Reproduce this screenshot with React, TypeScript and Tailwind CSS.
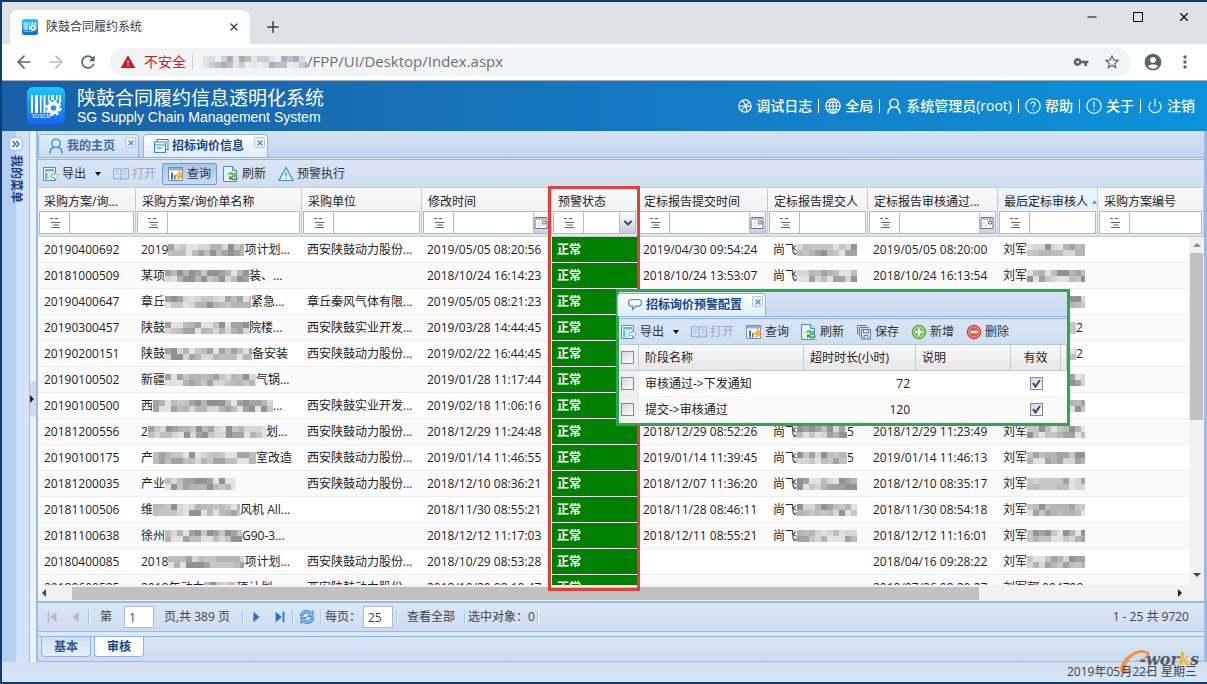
import type { ReactNode } from 'react';
import {
	ArrowLeft,
	ArrowRight,
	ChevronDown,
	ChevronsRight,
	Minus,
	Plus,
	Power,
	X
} from 'lucide-react';
import {
	MdAccountCircle,
	MdMoreVert,
	MdRefresh,
	MdStarBorder,
	MdVpnKey,
	MdWarning
} from 'react-icons/md';
import { clsx } from 'clsx';

type Masked = { pre: string; mask: number; post?: string };

type Row = {
	code: string;
	name: Masked;
	unit: string;
	modified: string;
	submitted: string;
	submitter?: Masked;
	approved: string;
	reviewer: Masked;
};

const POWER = '西安陕鼓动力股份...';
const INDUSTRY = '西安陕鼓实业开发...';
const submitter: Masked = { pre: '尚飞', mask: 60 };
const reviewer: Masked = { pre: '刘军', mask: 58 };

const rows: Row[] = [
	{ code: '20190400692', name: { pre: '2019', mask: 76, post: '项计划...' }, unit: POWER, modified: '2019/05/05 08:20:56', submitted: '2019/04/30 09:54:24', submitter, approved: '2019/05/05 08:20:00', reviewer },
	{ code: '20181000509', name: { pre: '某项', mask: 84, post: '装、...' }, unit: '', modified: '2018/10/24 16:14:23', submitted: '2018/10/24 13:53:07', submitter, approved: '2018/10/24 16:13:54', reviewer },
	{ code: '20190400647', name: { pre: '章丘', mask: 86, post: '紧急...' }, unit: '章丘秦风气体有限...', modified: '2019/05/05 08:21:23', submitted: '', approved: '', reviewer },
	{ code: '20190300457', name: { pre: '陕鼓', mask: 84, post: '院楼...' }, unit: INDUSTRY, modified: '2019/03/28 14:44:45', submitted: '', approved: '', reviewer: { pre: '刘军', mask: 49, post: '2' } },
	{ code: '20190200151', name: { pre: '陕鼓', mask: 87, post: '备安装' }, unit: POWER, modified: '2019/02/22 16:44:45', submitted: '', approved: '', reviewer: { pre: '刘军', mask: 49, post: '2' } },
	{ code: '20190100502', name: { pre: '新疆', mask: 91, post: '气锅...' }, unit: '', modified: '2019/01/28 11:17:44', submitted: '', approved: '', reviewer },
	{ code: '20190100500', name: { pre: '西', mask: 120, post: '...' }, unit: INDUSTRY, modified: '2019/02/18 11:06:16', submitted: '', approved: '', reviewer },
	{ code: '20181200556', name: { pre: '2', mask: 118, post: '划...' }, unit: POWER, modified: '2018/12/29 11:24:48', submitted: '2018/12/29 08:52:26', submitter: { pre: '尚飞', mask: 50, post: '5' }, approved: '2018/12/29 11:23:49', reviewer },
	{ code: '20190100175', name: { pre: '产', mask: 103, post: '室改造' }, unit: POWER, modified: '2019/01/14 11:46:55', submitted: '2019/01/14 11:39:45', submitter: { pre: '尚飞', mask: 50, post: '5' }, approved: '2019/01/14 11:46:13', reviewer },
	{ code: '20181200035', name: { pre: '产业', mask: 70 }, unit: POWER, modified: '2018/12/10 08:36:21', submitted: '2018/12/07 11:36:20', submitter, approved: '2018/12/10 08:35:17', reviewer },
	{ code: '20181100506', name: { pre: '维', mask: 87, post: '风机 All...' }, unit: '', modified: '2018/11/30 08:55:21', submitted: '2018/11/28 08:46:11', submitter, approved: '2018/11/30 08:54:18', reviewer },
	{ code: '20181100638', name: { pre: '徐州', mask: 77, post: 'G90-3...' }, unit: '', modified: '2018/12/12 11:17:03', submitted: '2018/12/11 08:55:21', submitter, approved: '2018/12/12 11:16:01', reviewer },
	{ code: '20180400085', name: { pre: '2018', mask: 76, post: '项计划...' }, unit: POWER, modified: '2018/10/29 08:53:28', submitted: '', approved: '2018/04/16 09:28:22', reviewer },
	{ code: '20180600585', name: { pre: '2018年动力', mask: 32, post: '项计划...' }, unit: POWER, modified: '2018/10/29 08:19:47', submitted: '', approved: '2018/07/26 08:20:27', reviewer: { pre: '刘军郭 004709', mask: 0 } }
];

const columns: { title: string; kind?: 'date' | 'select'; sorted?: boolean }[] = [
	{ title: '采购方案/询...' },
	{ title: '采购方案/询价单名称' },
	{ title: '采购单位' },
	{ title: '修改时间', kind: 'date' },
	{ title: '预警状态', kind: 'select' },
	{ title: '定标报告提交时间', kind: 'date' },
	{ title: '定标报告提交人' },
	{ title: '定标报告审核通过...', kind: 'date' },
	{ title: '最后定标审核人', sorted: true },
	{ title: '采购方案编号' }
];

export default function App() {
	return (
		<div className="flex h-screen w-full flex-col overflow-hidden border-2 border-r-0 border-[#0f3a78] bg-[#dfe8f6] font-['Open_Sans','Noto_Sans_CJK_SC',sans-serif] text-xs text-[#222]">
			<BrowserBar />
			<AppHeader />
			<div className="flex min-h-0 flex-1 bg-[#e9f2fd]">
				<SideBar />
				<MainPanel />
			</div>
			<footer className="relative flex h-5 shrink-0 items-center justify-end bg-linear-to-b from-[#d3deed] to-[#d6e6fb] pr-2.5 text-[#444]">
				<Watermark />
				<span className="relative">2019年05月22日 星期三</span>
			</footer>
		</div>
	);
}

function BrowserBar() {
	return (
		<div className="shrink-0 border-b border-[#a9adb3] bg-white">
			<div className="flex h-[42px] items-end bg-[#dee1e6] pl-2">
				<div className="flex h-[34px] w-60 items-center rounded-t-lg bg-white pr-2.5 pl-3">
					<Logo className="h-4 w-4" />
					<span className="ml-2 flex-1 text-[#3c4043]">陕鼓合同履约系统</span>
					<button aria-label="关闭标签页">
						<X className="h-3 w-3 text-[#45494d]" strokeWidth={3} />
					</button>
				</div>
				<button aria-label="新标签页" className="mb-2 ml-3.5">
					<Plus className="h-[18px] w-[18px] text-[#3c4043]" />
				</button>
				<div className="mb-5 ml-auto flex items-center gap-8 pr-4 text-black">
					<button aria-label="最小化">
						<Minus className="h-3.5 w-3.5" />
					</button>
					<button aria-label="最大化">
						<svg viewBox="0 0 14 14" className="h-3.5 w-3.5" fill="none" stroke="currentColor">
							<path d="M2.5 2.500h9v9h-9z" />
						</svg>
					</button>
					<button aria-label="关闭">
						<X className="h-3.5 w-3.5" strokeWidth={2} />
					</button>
				</div>
			</div>
			<div className="flex h-9 items-center pr-3 pl-3 text-[#5f6368]">
				<button aria-label="后退">
					<ArrowLeft className="h-5 w-5" />
				</button>
				<button aria-label="前进" className="ml-3 text-[#b8babd]">
					<ArrowRight className="h-5 w-5" />
				</button>
				<button aria-label="刷新" className="ml-3">
					<MdRefresh className="h-5 w-5" />
				</button>
				<div className="ml-3 flex h-7 flex-1 items-center rounded-full bg-[#f1f3f4] pr-2.5 pl-2.5 text-sm">
					<MdWarning className="h-4 w-4 text-[#c5221f]" />
					<span className="ml-2 text-[#c5221f]">不安全</span>
					<span className="mx-1.5 h-4 w-px bg-[#d0d3d6]" />
					<span className="ml-1 flex">
						<Mosaic width={104} seed={77} tint />
					</span>
					<span className="flex-1 text-[15px] text-[#6d7175]">/FPP/UI/Desktop/Index.aspx</span>
					<MdVpnKey className="h-4 w-4" />
					<MdStarBorder className="ml-3.5 h-[18px] w-[18px]" />
				</div>
				<MdAccountCircle className="ml-3 h-5 w-5" />
				<MdMoreVert className="ml-3 h-5 w-5" />
			</div>
		</div>
	);
}

function AppHeader() {
	return (
		<header className="flex h-[50px] shrink-0 items-center bg-linear-to-r from-[#195fa5] to-[#0a92db] pr-3 pl-[25px] text-white">
			<Logo className="h-[38px] w-[38px]" />
			<div className="ml-3">
				<h1 className="text-[19px] leading-[22px]">陕鼓合同履约信息透明化系统</h1>
				<p className="font-['Liberation_Sans',sans-serif] text-sm leading-4">
					SG Supply Chain Management System
				</p>
			</div>
			<nav className="ml-auto flex items-center gap-1.5 text-sm font-medium">
				<HeaderLink text="调试日志">
					<svg viewBox="0 0 16 16" className="h-3.5 w-3.5" fill="none" stroke="currentColor" strokeWidth="1.3">
						<circle cx="8" cy="8" r="7" />
						<path d="M1 8c5 1 10-1 12-5M5 2c3 3 5 8 5 13M4 14c1-5 6-7 11-5" />
					</svg>
				</HeaderLink>
				<Bar />
				<HeaderLink text="全局">
					<svg viewBox="0 0 16 16" className="h-4 w-4" fill="none" stroke="currentColor" strokeWidth="1.1">
						<circle cx="8" cy="8" r="7.2" />
						<ellipse cx="8" cy="8" rx="3.5" ry="7.2" />
						<path d="M8 1v14M1 8h14M2 4.5h12M2 11.5h12" />
					</svg>
				</HeaderLink>
				<Bar />
				<HeaderLink text="系统管理员(root)">
					<PersonIcon className="h-4 w-4" />
				</HeaderLink>
				<Bar />
				<HeaderLink text="帮助">
					<svg viewBox="0 0 16 16" className="h-4 w-4" fill="none" stroke="currentColor" strokeWidth="1.1">
						<circle cx="8" cy="8" r="7.2" />
						<path d="M5.9 6.2c0-3 4.400-2.700 4.300-.1C10.200 7.600 8 7.700 8 9.700M8 11v1.300" />
					</svg>
				</HeaderLink>
				<Bar />
				<HeaderLink text="关于">
					<svg viewBox="0 0 16 16" className="h-4 w-4" fill="none" stroke="currentColor" strokeWidth="1.1">
						<circle cx="8" cy="8" r="7.2" />
						<path d="M8 3.5v6M8 11v1.5" />
					</svg>
				</HeaderLink>
				<Bar />
				<HeaderLink text="注销">
					<Power className="h-4 w-4" strokeWidth={1.7} />
				</HeaderLink>
			</nav>
		</header>
	);
}

function HeaderLink({ text, children }: { text: string; children: ReactNode }) {
	return (
		<a href="#" className="flex items-center gap-1 whitespace-nowrap">
			{children}
			{text}
		</a>
	);
}

function Bar() {
	return <span className="h-3.5 w-px bg-white" />;
}

function SideBar() {
	return (
		<aside className="mr-1.5 flex w-7 shrink-0 border-r border-[#a9bfe0] bg-linear-to-r from-[#b4cff0] from-50% to-[#d4e2fb] to-55%">
			<div className="flex w-full flex-col items-center pt-1.5">
				<button aria-label="展开" className="flex h-3.5 w-3.5 items-center justify-center rounded-sm border border-[#9db9de] bg-[#f0f6ff]">
					<ChevronsRight className="h-3 w-3 text-[#2f568f]" strokeWidth={2.5} />
				</button>
				<span className="mt-1 font-bold text-[#15428b] [text-orientation:sideways] [writing-mode:vertical-rl]">
					我的菜单
				</span>
			</div>
		</aside>
	);
}

function MainPanel() {
	return (
		<main className="relative flex min-w-0 flex-1 flex-col border-r-[3px] border-b border-l-2 border-[#99bbe8] bg-[#d5e3f4]">
			<span className="absolute top-[250px] -left-2 flex h-9 w-1.5 items-center rounded-l bg-[#d5dbe6]">
				<svg viewBox="0 0 4 8" className="h-2 w-1">
					<path d="M0 0l4 4-4 4z" fill="#222" />
				</svg>
			</span>
			<div className="flex h-[26px] shrink-0 items-end gap-1 bg-linear-to-b from-[#d5e2f2] to-[#c3d6ef]">
				<Tab text="我的主页">
					<PersonIcon className="h-4 w-4 text-[#3c94cf]" />
				</Tab>
				<Tab text="招标询价信息" active>
					<svg viewBox="0 0 16 16" className="h-4 w-4" fill="none" stroke="#2f93b8" strokeWidth="1.2">
						<path d="M4 3.5V1.5h11v10h-2M1.5 4h11v10.500h-11zM1.5 7h11M4 10h5" />
					</svg>
				</Tab>
			</div>
			<div className="h-[3px] shrink-0 border-y border-[#8db2e3] bg-[#deecfd]" />
			<div className="flex h-[27px] shrink-0 items-center bg-linear-to-b from-[#d9e5f5] to-[#cfdff1]">
				<div className="-ml-px flex">
					<CommonTools active />
					<Tool text="预警执行">
						<svg viewBox="0 0 16 16" className="h-4 w-4" fill="#e3f1fb" stroke="#3a93c9" strokeWidth="1.200">
							<path d="M8 1.5L15 14.500H1zM8 6v4.500M8 11.800v1.200" />
						</svg>
					</Tool>
				</div>
			</div>
			<Grid />
			<Pager />
			<div className="h-1 shrink-0 bg-[#d9e8fb]" />
			<div className="flex h-[25px] shrink-0 gap-[3px] border-t border-[#8db2e3] bg-linear-to-b from-[#dae6f4] to-[#cbdcf0] pl-[3px] font-bold text-[#30588f]">
				<button className="h-5 w-[50px] rounded-b border border-t-0 border-[#8db2e3] bg-linear-to-b from-[#cfe0f5] to-[#e6f0fc]">
					基本
				</button>
				<button className="h-5 w-[50px] rounded-b border border-t-0 border-[#8db2e3] bg-white text-[#15428b]">
					审核
				</button>
			</div>
		</main>
	);
}

function Tab({ text, active, children }: { text: string; active?: boolean; children: ReactNode }) {
	return (
		<div
			className={clsx(
				'flex h-[23px] items-start rounded-t border border-b-0 border-[#8db2e3] pr-0.5 pl-[9px] font-bold',
				active ? 'bg-linear-to-b from-white to-[#deecfd] text-[#15498b]' : 'bg-linear-to-b from-[#e3eefb] to-[#c8daf2] text-[#416aa3]'
			)}
		>
			<button className="flex h-[22px] items-center gap-[3px]">
				{children}
				{text}
			</button>
			<button aria-label="关闭" className="mt-0.5 ml-2.5 flex h-[11px] w-[11px] items-center justify-center rounded-xs border border-[#b3c8e6] bg-[#eaf2fd]">
				<X className="h-2 w-2 text-[#7088ab]" strokeWidth={4} />
			</button>
		</div>
	);
}

function Tool({ text, active, disabled, caret, children }: { text: string; active?: boolean; disabled?: boolean; caret?: boolean; children: ReactNode }) {
	return (
		<button
			disabled={disabled}
			className={clsx(
				'flex h-[22px] items-center gap-[3px] rounded-xs border px-[5px] whitespace-nowrap',
				active ? 'border-[#7a9ac4] bg-linear-to-b from-[#a9c8ee] to-[#c5dbf5]' : 'border-transparent',
				disabled ? 'text-[#9ba8b8]' : 'text-[#333]'
			)}
		>
			{children}
			{text}
			{caret && (
				<svg viewBox="0 0 6 4" className="ml-1.5 h-1 w-1.5">
					<path d="M0 0h6L3 4z" fill="#111" />
				</svg>
			)}
		</button>
	);
}

// 主表格与预警配置窗口共用的按钮
function CommonTools({ active }: { active?: boolean }) {
	return (
		<>
			<Tool text="导出" caret>
				<svg viewBox="0 0 16 16" className="h-4 w-4">
					<path d="M.5 1.5h12v13H.5z" fill="#fff" stroke="#5c8fae" />
					<path d="M2 3h9v2.500H2zM2 6.500h2.500v7H2z" fill="#4fc0c8" />
					<path d="M5.500 6.500H8v2H5.500zM9 6.500h2v1H9zM5.500 9.500H8v1.500H5.500zM5.500 12H8v1.500H5.500z" fill="#9fdfe0" />
					<path d="M8.5 8.500h3V6L15.500 10l-4 4v-2.500h-3z" fill="#f4f7fa" stroke="#7b8fa6" strokeWidth=".8" />
				</svg>
			</Tool>
			<Tool text="打开" disabled>
				<svg viewBox="0 0 16 16" className="h-4 w-4" fill="#d2e1f1" stroke="#8facce">
					<path d="M.5 3Q5 1.500 8 3.500 11 1.500 15.500 3v10Q11 11.500 8 13.500 5 11.500.5 13zM8 3.500v10" />
					<path d="M2.500 5.500h3M2.500 8h3M10.500 5.500h3M10.500 8h3" strokeWidth=".8" />
				</svg>
			</Tool>
			<Tool text="查询" active={active}>
				<svg viewBox="0 0 16 16" className="h-4 w-4">
					<path d="M.5 1.500h14v13H.5z" fill="#fff" stroke="#6f8fb8" />
					<path d="M1 2h13v2.500H1z" fill="#8fb0da" />
					<path d="M3 6.500h2v7H3zM6 9h1.500v4.500H6z" fill="#3d73bb" />
					<path d="M11.500 4l1 2.500 2.500.5-1.500 2.500 1.500 3-3-.5-2.500 2V11L7 9l3-1z" fill="#f7b93a" stroke="#eda426" strokeWidth=".5" />
				</svg>
			</Tool>
			<Tool text="刷新">
				<svg viewBox="0 0 16 16" className="h-4 w-4">
					<path d="M.5.5h9l4 4v11H.5z" fill="#e7f1fb" stroke="#4f8cc4" />
					<path d="M9.500.5v4h4" fill="#c2d9ef" stroke="#4f8cc4" />
					<path d="M4 9.500c1-3.500 5-4.500 7.500-2L13 6v5H8l1.500-1.500C8 8 5.500 8 4 9.500z" fill="#6cc055" />
					<path d="M15.500 11c-1 3.500-5.500 4.500-8 2L6 14.500v-4h4.500l-1.500 1.500c2 1 4.500.5 6.500-1z" fill="#3a9d4a" />
				</svg>
			</Tool>
		</>
	);
}

function Columns() {
	return (
		<colgroup>
			<col className="w-[98px]" />
			<col className="w-[166px]" />
			<col className="w-[120px]" />
			<col className="w-[130px]" />
			<col className="w-[86px]" />
			<col className="w-[130px]" />
			<col className="w-[100px]" />
			<col className="w-[130px]" />
			<col className="w-[100px]" />
			<col />
		</colgroup>
	);
}

function Grid() {
	return (
		<section className="relative flex min-h-0 flex-1 flex-col bg-white">
			<table className="w-full shrink-0 table-fixed border-separate border-spacing-0">
				<Columns />
				<thead>
					<tr>
						{columns.map(col => (
							<th
								key={col.title}
								className={clsx(
									'h-[50px] border-t border-r border-b border-[#c8ccd2] p-0 text-left font-normal',
									col.sorted ? 'bg-linear-to-b from-[#eef6fe] to-[#d9e9fa]' : 'bg-linear-to-b from-[#fafafa] to-[#e6e7ea]'
								)}
							>
								<div className="flex h-[22px] items-center pt-1 pl-1.5 whitespace-nowrap">
									{col.title}
									{col.sorted && (
										<svg viewBox="0 0 6 4" className="ml-1 h-1 w-1.5">
											<path d="M0 4h6L3 0z" fill="#5c8bc6" />
										</svg>
									)}
								</div>
								<Filter title={col.title} kind={col.kind} />
							</th>
						))}
					</tr>
				</thead>
			</table>
			<div className="flex min-h-0 flex-1">
				<div className="min-w-0 flex-1 overflow-hidden">
					<table className="w-full table-fixed border-separate border-spacing-0">
						<Columns />
						<tbody>
							{rows.map((row, i) => (
								<tr key={row.code} className="odd:bg-white even:bg-[#fafafa]">
									<Cell>{row.code}</Cell>
									<Cell>
										<MaskedText value={row.name} seed={i * 3 + 1} />
									</Cell>
									<Cell>{row.unit}</Cell>
									<Cell>{row.modified}</Cell>
									<td className="border-b border-white bg-[#008000] px-[5px] py-0 font-bold text-white">正常</td>
									<Cell>{row.submitted}</Cell>
									<Cell>{row.submitter && <MaskedText value={row.submitter} seed={i * 3 + 2} />}</Cell>
									<Cell>{row.approved}</Cell>
									<Cell>
										<MaskedText value={row.reviewer} seed={i * 3 + 3} />
									</Cell>
									<Cell />
								</tr>
							))}
						</tbody>
					</table>
				</div>
				<div className="flex w-[15px] shrink-0 flex-col items-center bg-[#f1f1f1]">
					<svg viewBox="0 0 8 4" className="my-1.5 h-1 w-2">
						<path d="M0 4h8L4 0z" fill="#8a8a8a" />
					</svg>
					<div className="h-[48%] w-[13px] bg-[#c1c1c1]" />
					<svg viewBox="0 0 8 4" className="mt-auto mb-2 h-1 w-2">
						<path d="M0 0h8L4 4z" fill="#444" />
					</svg>
				</div>
			</div>
			<div className="flex h-4 shrink-0 items-center bg-[#f1f1f1] pr-[22px] pl-1">
				<svg viewBox="0 0 4 8" className="h-2 w-1">
					<path d="M4 0v8L0 4z" fill="#444" />
				</svg>
				<div className="mx-[26px] flex flex-1">
					<div className="h-[13px] w-[84%] bg-[#c1c1c1]" />
				</div>
				<svg viewBox="0 0 4 8" className="h-2 w-1">
					<path d="M0 0v8l4-4z" fill="#222" />
				</svg>
			</div>
			<div className="pointer-events-none absolute -top-px bottom-2.5 left-[510px] w-[92px] border-[3px] border-[#e0403c]" />
			<WarnConfig />
		</section>
	);
}

function Cell({ children }: { children?: ReactNode }) {
	return (
		<td className="h-[26px] border-b border-[#ededed] p-0 pl-[5px] leading-[25px] whitespace-nowrap first:pl-1.5">
			<div className="h-[25px]">{children}</div>
		</td>
	);
}

function Filter({ title, kind }: { title: string; kind?: 'date' | 'select' }) {
	return (
		<div className="mx-px mb-px flex h-[23px] border border-[#b5b8c8] bg-white">
			<button aria-label={`${title} 条件`} className="flex w-[30px] shrink-0 items-center justify-center border-r border-[#b5b8c8]">
				<svg viewBox="0 0 12 12" className="h-3 w-3" stroke="#666">
					<path d="M1 1.5h3M6 1.5h3M2 5.5h9M2 10.500h9M4 8h6" />
				</svg>
			</button>
			{kind === 'select' ? (
				<select aria-label={title} className="w-0 min-w-0 flex-1 appearance-none outline-none" />
			) : (
				<input aria-label={title} className="w-0 min-w-0 flex-1 px-1 outline-none" />
			)}
			{kind === 'date' && (
				<span className="flex w-4 shrink-0 items-center border-l border-[#b5b8c8] bg-linear-to-b from-white to-[#c9ced9]">
					<svg viewBox="0 0 14 14" className="h-3.5 w-3.5">
						<path d="M1 1.5h12v11H1z" fill="#fff" stroke="#5478a8" />
						<path d="M1 2h12v2H1z" fill="#a9c3e6" />
						<circle cx="10" cy="6.5" r="1.7" fill="#fff" stroke="#a03030" />
						<path d="M3 7h2M6 7h1M3 9.500h2M6 9.500h2" stroke="#b8c4d4" />
					</svg>
				</span>
			)}
			{kind === 'select' && (
				<span className="flex w-4 shrink-0 items-center justify-center border-l border-[#b5b8c8] bg-linear-to-b from-white to-[#c5cbd8]">
					<ChevronDown className="h-3 w-3 text-[#2f4a6d]" strokeWidth={4} />
				</span>
			)}
		</div>
	);
}

function WarnConfig() {
	return (
		<div className="absolute top-[102px] left-[578px] w-[454px] border-[3px] border-[#2ba94f] bg-white">
			<div className="flex h-6 items-end bg-linear-to-b from-[#d5e2f4] to-[#c9daf2]">
				<div className="-ml-0.5">
					<Tab text="招标询价预警配置" active>
						<svg viewBox="0 0 16 16" className="h-4 w-4" fill="#f3f8fe" stroke="#4f86c0" strokeWidth="1.2">
							<path d="M5 2.500h6q3.500 0 3.500 3.300T11 9.200H9L5.500 12.500V9.200H5Q1.500 9.200 1.500 5.800T5 2.500z" />
						</svg>
					</Tab>
				</div>
			</div>
			<div className="h-[3px] border-y border-[#8db2e3] bg-[#deecfd]" />
			<div className="flex h-[26px] items-center border-b border-[#b5c8e0] bg-linear-to-b from-[#d9e5f5] to-[#cfdff1]">
				<div className="-ml-1 flex">
					<CommonTools />
					<Tool text="保存">
						<svg viewBox="0 0 16 16" className="h-4 w-4" fill="#dbe9f8" stroke="#477fbd">
							<path d="M1.500 10V1.500h9M3.500 12.500v-9h9" fill="none" />
							<path d="M5.500 5.500h9v9.500h-9zM7.500 5.500v3.500h5V5.500M8 15v-3.500h4V15" />
						</svg>
					</Tool>
					<Tool text="新增">
						<svg viewBox="0 0 16 16" className="h-4 w-4">
							<circle cx="8" cy="8" r="6.8" fill="#7fc15a" stroke="#4f9b3b" />
							<circle cx="8" cy="8" r="5.3" fill="none" stroke="#c8e8b4" strokeWidth=".8" />
							<path d="M8 4.500v7M4.500 8h7" stroke="#fff" strokeWidth="2.2" />
						</svg>
					</Tool>
					<Tool text="删除">
						<svg viewBox="0 0 16 16" className="h-4 w-4">
							<circle cx="8" cy="8" r="6.8" fill="#e4574a" stroke="#c53b30" />
							<circle cx="8" cy="8" r="5.3" fill="none" stroke="#f5b0a6" strokeWidth=".8" />
							<path d="M4.500 8h7" stroke="#fff" strokeWidth="2.4" />
						</svg>
					</Tool>
				</div>
			</div>
			<table className="w-full table-fixed border-separate border-spacing-0">
				<colgroup>
					<col className="w-5" />
					<col className="w-[165px]" />
					<col className="w-[112px]" />
					<col className="w-[95px]" />
					<col className="w-[50px]" />
					<col />
				</colgroup>
				<thead>
					<tr className="h-[26px] bg-linear-to-b from-[#f9f9f9] to-[#e6e6e8] text-left *:border-r *:border-b *:border-[#c8c8c8] *:py-0 *:font-normal">
						<th className="px-0.5">
							<CheckBox label="全选" />
						</th>
						<th className="px-1.5">阶段名称</th>
						<th className="px-1.5">超时时长(小时)</th>
						<th className="px-1.5">说明</th>
						<th className="text-center">有效</th>
						<th />
					</tr>
				</thead>
				<tbody>
					<ConfigRow stage="审核通过->下发通知" hours={72} />
					<ConfigRow stage="提交->审核通过" hours={120} />
				</tbody>
			</table>
		</div>
	);
}

function ConfigRow({ stage, hours }: { stage: string; hours: number }) {
	return (
		<tr className="h-[26px] even:bg-[#fafafa] *:border-b *:border-[#ededed] *:py-0">
			<td className="border-r bg-[#f0f0f0] px-0.5">
				<CheckBox label={stage} />
			</td>
			<td className="px-1.5">{stage}</td>
			<td className="px-1.5 text-right">{hours}</td>
			<td />
			<td>
				<div className="flex justify-center">
					<CheckBox label="有效" checked />
				</div>
			</td>
			<td />
		</tr>
	);
}

function CheckBox({ label, checked }: { label: string; checked?: boolean }) {
	return (
		<span className="relative flex h-[13px] w-[13px]">
			<input
				type="checkbox"
				aria-label={label}
				defaultChecked={checked}
				className="peer h-full w-full appearance-none border border-[#7f8a99] bg-linear-to-br from-[#d3d6da] to-white"
			/>
			<svg viewBox="0 0 13 13" className="pointer-events-none absolute inset-0 hidden peer-checked:block" fill="none" stroke="#2c4678" strokeWidth="2">
				<path d="M3 6l2.500 3.500L10 3" />
			</svg>
		</span>
	);
}

function Pager() {
	return (
		<div className="flex h-[31px] shrink-0 items-center border-t-2 border-b border-[#99bbe8] bg-linear-to-b from-[#dce7f5] to-[#cddcf0] pr-[15px] pl-0.5 text-[#444]">
			<PageButton label="第一页" d="M3 2h2v12H3zM13 2v12L6 8z" disabled />
			<PageButton label="上一页" d="M11 2v12L4 8z" disabled />
			<Divider />
			<label htmlFor="page" className="ml-2.5">第</label>
			<input id="page" defaultValue="1" className="mr-2.5 ml-3 h-[22px] w-[30px] border border-[#b5b8c8] bg-white px-1" />
			<span>页,共 389 页</span>
			<span className="w-3" />
			<Divider />
			<PageButton label="下一页" d="M5 2v12l7-6z" />
			<PageButton label="最后页" d="M3 2v12l7-6zM11 2h2v12h-2z" />
			<Divider />
			<button aria-label="刷新" className="mx-[5px]">
				<svg viewBox="0 0 16 16" className="h-4 w-4" fill="#7db8ee" stroke="#2e76c3" strokeWidth=".8">
					<path d="M1 7C2 1 9 0 12 3.500l2-2v6H8.500l2-2C8 3 4.500 4 4 7z" />
					<path d="M15 9c-1 6-8 7-11 3.500l-2 2v-6h5.500l-2 2C8 13 11.500 12 12 9z" />
				</svg>
			</button>
			<Divider />
			<label htmlFor="size" className="ml-[3px] w-[38px] whitespace-nowrap">每页：</label>
			<input id="size" defaultValue="25" className="mr-[3px] h-[22px] w-[30px] border border-[#b5b8c8] bg-white px-1" />
			<Divider />
			<button className="mx-[9px]">查看全部</button>
			<Divider />
			<span className="mx-0.5">选中对象：0</span>
			<Divider />
			<span className="ml-auto">1 - 25 共 9720</span>
		</div>
	);
}

function PageButton({ label, d, disabled }: { label: string; d: string; disabled?: boolean }) {
	return (
		<button aria-label={label} disabled={disabled} className={clsx('flex w-6 justify-center', disabled ? 'text-[#b0bccb]' : 'text-[#2d6fc4]')}>
			<svg viewBox="0 0 16 16" className="h-3.5 w-3.5">
				<path d={d} fill="currentColor" />
			</svg>
		</button>
	);
}

function Divider() {
	return <span className="h-3.5 w-0.5 border-l border-[#98c8ff] bg-white" />;
}

function MaskedText({ value, seed }: { value: Masked; seed: number }) {
	return (
		<span className="flex h-full items-center">
			{value.pre}
			{value.mask > 0 && <Mosaic width={value.mask} seed={seed} />}
			{value.post}
		</span>
	);
}

const shades = ['#b5b5b5', '#c6c6c6', '#a3a3a3', '#d6d6d6', '#bdbdbd', '#929292', '#e2e2e2'];
const tints = ['#d9dcdf', '#b9bdc4', '#e6e3e0', '#c9cdd4', '#dfe6ee', '#a9adb4', '#eceff1'];

function Mosaic({ width, seed, tint }: { width: number; seed: number; tint?: boolean }) {
	const palette = tint ? tints : shades;
	const tiles: ReactNode[] = [];
	let n = seed * 7919 + 13;
	for (let y = 0; y < 12; y += 6) {
		for (let x = 0; x < width; x += 6) {
			n = (n * 1103515 + 12345) % 2147483;
			tiles.push(<rect key={`${x}-${y}`} x={x} y={y} width="6" height="6" fill={palette[n % 7]} />);
		}
	}
	return (
		<svg width={width} height="12" viewBox={`0 0 ${width} 12`} className="shrink-0" shapeRendering="crispEdges">
			{tiles}
		</svg>
	);
}

function PersonIcon({ className }: { className?: string }) {
	return (
		<svg viewBox="0 0 16 16" className={className} fill="none" stroke="currentColor" strokeWidth="1.4">
			<circle cx="8" cy="5.3" r="4.2" />
			<path d="M1.800 15.500c.2-3.500 1.800-5.500 4-6.500M14.200 15.500c-.2-3.500-1.800-5.500-4-6.500" />
		</svg>
	);
}

function Logo({ className }: { className?: string }) {
	return (
		<svg viewBox="0 0 38 38" className={clsx('shrink-0', className)}>
			<defs>
				<linearGradient id="logo" x1="0" y1="0" x2="0" y2="1">
					<stop offset="0" stopColor="#1cc8fa" />
					<stop offset="1" stopColor="#1a62e8" />
				</linearGradient>
			</defs>
			<rect width="38" height="38" rx="6" fill="url(#logo)" />
			<path d="M4 8h2v18H4zM8 8h3v18H8zM13 8h1.5v18H13zM16.500 8h2v18h-2zM21 8h1.5v6H21zM24 8h3v5h-3zM29 8h1.5v5H29zM32 8h2v8h-2z" fill="#fff" />
			<circle cx="26.5" cy="21" r="4.5" fill="none" stroke="#fff" strokeWidth="3.5" />
			<circle cx="26.5" cy="21" r="6.8" fill="none" stroke="#fff" strokeWidth="2.5" strokeDasharray="3 2.34" />
			<text x="5" y="31" fontSize="5" fill="#fff" fontFamily="Liberation Sans">
				SGSCM
			</text>
		</svg>
	);
}

function Watermark() {
	return (
		<div className="absolute right-2 bottom-1.5 flex items-start">
			<svg viewBox="0 0 34 28" className="h-7 w-[34px]">
				<path d="M28 3C16-2 2 12 1 21c0 6 7 6 14 2-7 1-9-1-8-5C9 10 19 3 26 5c4 2-1 6-12 8 12 0 22-6 14-10z" fill="#f0924e" />
				<path d="M14 24q10 2 19-3v3q-10 3-19 0z" fill="#8fa4e0" />
			</svg>
			<span className="-ml-3.5 font-['DejaVu_Serif',serif] text-base leading-6 font-bold text-[#555a66] italic">
				-wor<span className="text-[#edb52d]">k</span>s
			</span>
		</div>
	);
}
